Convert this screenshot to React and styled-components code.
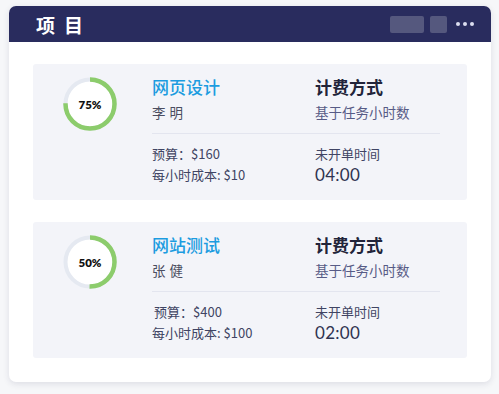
import React from 'react';
import styled, { createGlobalStyle } from 'styled-components';

const GlobalStyle = createGlobalStyle`
  html, body {
    margin: 0;
    padding: 0;
    background: #f6f7f9;
  }
  body {
    font-family: 'Lato', 'Noto Sans CJK SC', sans-serif;
  }
`;

const Page = styled.div`
  width: 499px;
  height: 394px;
  padding: 6px 8px 0 9px;
  box-sizing: border-box;
`;

const Panel = styled.div`
  width: 482px;
  background: #fff;
  border-radius: 7px;
  box-shadow: 0 2px 6px rgba(40, 44, 80, 0.12);
  overflow: hidden;
`;

const Header = styled.div`
  height: 36px;
  background: #292c5e;
  display: flex;
  align-items: center;
  padding: 0 17px 0 27px;
`;

const Title = styled.h1`
  margin: 0;
  flex: 1;
  color: #fff;
  font-family: 'Noto Sans CJK SC', sans-serif;
  font-size: 19px;
  font-weight: 700;
  letter-spacing: 9px;
`;

const HeaderBox = styled.div`
  width: ${p => p.$w}px;
  height: 17px;
  border-radius: 2px;
  background: #55587e;
  margin-right: 6px;
`;

const Dots = styled.div`
  display: flex;
  gap: 3px;
  margin-left: 3px;

  span {
    width: 4px;
    height: 4px;
    border-radius: 50%;
    background: #dcdef0;
  }
`;

const List = styled.div`
  display: flex;
  flex-direction: column;
  gap: 22px;
  padding: 22px 24px 24px;
`;

const Card = styled.div`
  background: #f3f4f9;
  border-radius: 3px;
  height: 136px;
  box-sizing: border-box;
  padding: 13px 0 0 30px;
  display: flex;
  align-items: flex-start;
  gap: 35px;
`;

const Ring = styled.div`
  position: relative;
  width: 54px;
  height: 54px;
  flex-shrink: 0;

  svg {
    display: block;
  }
`;

const RingLabel = styled.div`
  position: absolute;
  inset: 0;
  display: flex;
  align-items: center;
  justify-content: center;
  font-family: 'Lato', sans-serif;
  font-size: 11.5px;
  font-weight: 800;
  color: #111;
`;

const Body = styled.div`
  width: 288px;
  display: grid;
  grid-template-columns: 163px 1fr;
  align-content: start;
  font-family: 'Noto Sans CJK SC', sans-serif;
`;

const Name = styled.div`
  font-size: 17px;
  line-height: 20px;
  font-weight: ${p => (p.$blue ? 500 : 700)};
  color: ${p => (p.$blue ? '#1c9ce0' : '#22243a')};
`;

const Sub = styled.div`
  margin-top: 5px;
  font-size: 13.5px;
  line-height: 20px;
  color: ${p => (p.$spaced ? '#4a4d60' : '#575b86')};
  letter-spacing: ${p => (p.$spaced ? '4px' : '0')};
`;

const Divider = styled.div`
  grid-column: 1 / 3;
  height: 1px;
  margin-top: 11px;
  background: #e3e5ef;
`;

const Meta = styled.div`
  margin-top: ${p => (p.$first ? 11 : 3)}px;
  font-size: 13px;
  line-height: 18px;
  color: #404463;
  padding-left: ${p => (p.$indent ? 2 : 0)}px;
`;

const Time = styled.div`
  margin-top: 2px;
  font-family: 'Lato', sans-serif;
  font-size: 17px;
  line-height: 20px;
  letter-spacing: 0.3px;
  color: #2f3350;
`;

function Progress({ value }) {
  const r = 24.5;
  const c = 2 * Math.PI * r;
  return (
    <Ring>
      <svg width="54" height="54" viewBox="0 0 54 54">
        <circle cx="27" cy="27" r={r} fill="#fff" stroke="#e5e9f1" strokeWidth="4" />
        <circle
          cx="27"
          cy="27"
          r={r}
          fill="none"
          stroke="#8ccc6c"
          strokeWidth="4.5"
          strokeDasharray={`${(c * value) / 100} ${c}`}
          transform="rotate(-90 27 27)"
        />
      </svg>
      <RingLabel>{value}%</RingLabel>
    </Ring>
  );
}

const projects = [
  { pct: 75, title: '网页设计', owner: '李明', budget: '$160', rate: '$10', time: '04:00' },
  { pct: 50, title: '网站测试', owner: '张健', budget: '$400', rate: '$100', time: '02:00' },
];

export default function App() {
  return (
    <Page>
      <GlobalStyle />
      <Panel>
        <Header>
          <Title>项目</Title>
          <HeaderBox $w={34} />
          <HeaderBox $w={17} />
          <Dots>
            <span />
            <span />
            <span />
          </Dots>
        </Header>
        <List>
          {projects.map((p, i) => (
            <Card key={p.title}>
              <Progress value={p.pct} />
              <Body>
                <Name $blue>{p.title}</Name>
                <Name>计费方式</Name>
                <Sub $spaced>{p.owner}</Sub>
                <Sub>基于任务小时数</Sub>
                <Divider />
                <Meta $first $indent={i === 1}>预算：{p.budget}</Meta>
                <Meta $first>未开单时间</Meta>
                <Meta>每小时成本: {p.rate}</Meta>
                <Time>{p.time}</Time>
              </Body>
            </Card>
          ))}
        </List>
      </Panel>
    </Page>
  );
}
